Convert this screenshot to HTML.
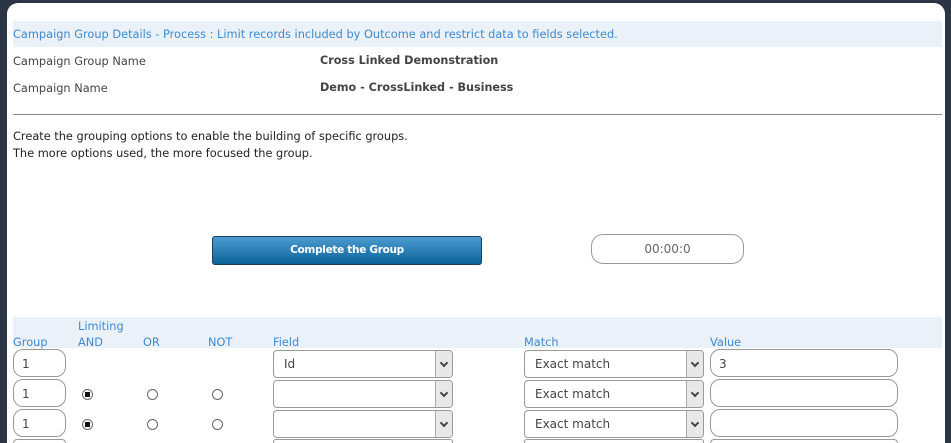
<html style="width:951px;height:443px;overflow:hidden"><head><style>
body{margin:0;width:951px;height:443px;background:#2b3544;overflow:hidden;font-family:"DejaVu Sans","Liberation Sans",sans-serif;font-size:11.35px;color:#444;position:relative}
.panel{position:absolute;left:7px;top:3px;width:938px;height:440px;background:#fff;border-radius:11px 11px 0 0}
.a{position:absolute;white-space:nowrap}
.bar{position:absolute;left:13px;width:929px;background:#eaf1f9}
.blue{color:#3f8ad0}
.inp{position:absolute;height:28px;border:1px solid #999;border-radius:10px;background:#fff;box-sizing:border-box;padding:7px 8px;font-size:12px;color:#444}
.sel{position:absolute;height:28px;border:1px solid #999;border-radius:4px;background:#fff;box-sizing:border-box;padding:6px 10px;font-size:12px;color:#444}
.sel:after{content:"";position:absolute;right:0;top:0;width:16px;height:26px;background:#e8e8e8;border-left:1px solid #aaa;border-radius:0 3px 3px 0}
.sel i{position:absolute;right:5px;top:9px;width:4px;height:4px;border-right:2px solid #444;border-bottom:2px solid #444;transform:rotate(45deg);z-index:1}
.r{position:absolute;width:9px;height:9px;border:1px solid #666;border-radius:50%;background:#fff}
.r.on:after{content:"";position:absolute;left:2px;top:2px;width:5px;height:5px;background:#111}
.last{position:absolute;top:439px;height:4px;border:1px solid #999;border-bottom:none;border-radius:8px 8px 0 0;box-sizing:border-box}
</style></head><body>
<div class="panel"></div>
<div class="bar" style="top:21px;height:26px"></div>
<div class="a blue" style="left:13px;top:27px">Campaign Group Details - Process : Limit records included by Outcome and restrict data to fields selected.</div>
<div class="a" style="left:13px;top:54px">Campaign Group Name</div>
<div class="a" style="left:320px;top:54px;font-weight:bold;font-size:11.2px">Cross Linked Demonstration</div>
<div class="a" style="left:13px;top:81px">Campaign Name</div>
<div class="a" style="left:320px;top:81px;font-weight:bold;font-size:11.2px">Demo - CrossLinked - Business</div>
<div class="a" style="left:13px;top:114px;width:929px;height:1px;background:#888"></div>
<div class="a" style="left:13px;top:129px;color:#222">Create the grouping options to enable the building of specific groups.</div>
<div class="a" style="left:13px;top:146px;color:#222">The more options used, the more focused the group.</div>
<div class="a" style="left:212px;top:236px;width:270px;height:29px;box-sizing:border-box;border:1px solid #1e3f5c;border-radius:3px;background:linear-gradient(#4c9bd0,#0c6399);color:#fff;font-weight:bold;font-size:10.5px;letter-spacing:-0.3px;text-align:center;line-height:27px">Complete the Group</div>
<div class="a" style="left:591px;top:234px;width:153px;height:30px;box-sizing:border-box;border:1px solid #999;border-radius:12px;text-align:center;line-height:28px;color:#666;font-size:12px">00:00:0</div>
<div class="bar" style="top:317px;height:31px"></div>
<div class="a blue" style="left:78px;top:319px">Limiting</div>
<div class="a blue" style="left:13px;top:335px">Group</div>
<div class="a blue" style="left:78px;top:335px">AND</div>
<div class="a blue" style="left:143px;top:335px">OR</div>
<div class="a blue" style="left:208px;top:335px">NOT</div>
<div class="a blue" style="left:273px;top:335px">Field</div>
<div class="a blue" style="left:524px;top:335px">Match</div>
<div class="a blue" style="left:710px;top:335px">Value</div>

<div class="inp" style="left:13px;top:349px;width:53px">1</div>
<div class="sel" style="left:273px;top:350px;width:180px">Id<i></i></div>
<div class="sel" style="left:524px;top:350px;width:180px">Exact match<i></i></div>
<div class="inp" style="left:710px;top:349px;width:188px">3</div>

<div class="inp" style="left:13px;top:379px;width:53px">1</div>
<div class="r on" style="left:82px;top:389px"></div><div class="r" style="left:147px;top:389px"></div><div class="r" style="left:212px;top:389px"></div>
<div class="sel" style="left:273px;top:380px;width:180px"><i></i></div>
<div class="sel" style="left:524px;top:380px;width:180px">Exact match<i></i></div>
<div class="inp" style="left:710px;top:379px;width:188px"></div>

<div class="inp" style="left:13px;top:409px;width:53px">1</div>
<div class="r on" style="left:82px;top:419px"></div><div class="r" style="left:147px;top:419px"></div><div class="r" style="left:212px;top:419px"></div>
<div class="sel" style="left:273px;top:410px;width:180px"><i></i></div>
<div class="sel" style="left:524px;top:410px;width:180px">Exact match<i></i></div>
<div class="inp" style="left:710px;top:409px;width:188px"></div>

<div class="last" style="left:13px;width:53px"></div>
<div class="last" style="left:273px;width:180px;border-radius:3px 3px 0 0"></div>
<div class="last" style="left:524px;width:180px;border-radius:3px 3px 0 0"></div>
<div class="last" style="left:710px;width:188px"></div>
</body></html>
